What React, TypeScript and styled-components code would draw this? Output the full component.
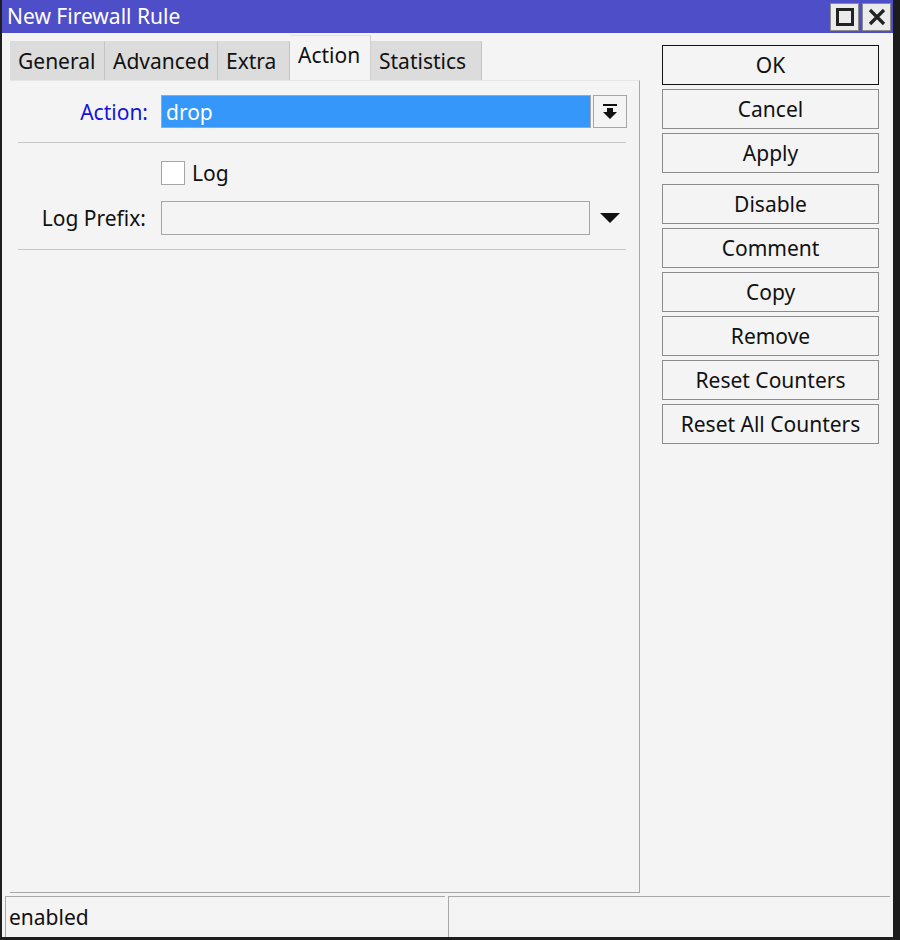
import React from "react";
import styled, { createGlobalStyle } from "styled-components";

const GlobalStyle = createGlobalStyle`
  html, body {
    margin: 0;
    padding: 0;
    background: #1c1c1c;
  }
  * { box-sizing: border-box; }
`;

const Window = styled.div`
  width: 900px;
  height: 940px;
  display: flex;
  flex-direction: column;
  background: #f4f4f4;
  border-left: 2px solid #1e1e1e;
  border-right: 7px solid #1c1c1c;
  border-bottom: 3px solid #1e1e1e;
  font-family: "Noto Sans", "Open Sans", sans-serif;
  font-size: 21px;
  color: #111;
  overflow: hidden;
`;

const TitleBar = styled.div`
  height: 33px;
  flex: 0 0 33px;
  background: #4e4ec9;
  display: flex;
  align-items: center;
  padding: 0 2px 0 5px;
`;

const Title = styled.div`
  flex: 1;
  color: #fff;
  font-size: 21px;
  line-height: 33px;
`;

const TitleButton = styled.button`
  width: 29px;
  height: 28px;
  margin-left: 3px;
  padding: 0;
  background: #ebebeb;
  border: 1px solid #8a8a8a;
  display: flex;
  align-items: center;
  justify-content: center;
`;

const Body = styled.div`
  flex: 1;
  display: flex;
  min-height: 0;
`;

const Main = styled.div`
  width: 638px;
  padding-left: 8px;
  display: flex;
  flex-direction: column;
`;

const TabStrip = styled.div`
  display: flex;
  align-items: flex-end;
  height: 47px;
`;

const Tab = styled.div<{ $active?: boolean; $w: number }>`
  width: ${(p) => p.$w}px;
  height: ${(p) => (p.$active ? "45px" : "39px")};
  padding: ${(p) => (p.$active ? "0 8px 6px" : "0 8px 0")};
  background: ${(p) => (p.$active ? "#f4f4f4" : "#dcdcdc")};
  border-right: 1px solid ${(p) => (p.$active ? "#cfcfcf" : "#c4c4c4")};
  border-top: 1px solid ${(p) => (p.$active ? "#e2e2e2" : "#dcdcdc")};
  display: flex;
  align-items: center;
  white-space: nowrap;
`;

const Panel = styled.div`
  flex: 1;
  border-right: 1px solid #a8a8a8;
  border-bottom: 1px solid #a8a8a8;
  border-top: 1px solid #e6e6e6;
  padding: 14px 13px 0 8px;
`;

const Row = styled.div<{ $top?: number }>`
  display: grid;
  grid-template-columns: 132px 430px 35px;
  column-gap: 11px;
  align-items: center;
  margin-top: ${(p) => p.$top ?? 0}px;
`;

const Label = styled.div<{ $blue?: boolean }>`
  text-align: right;
  color: ${(p) => (p.$blue ? "#1414d8" : "#111")};
  white-space: nowrap;
  padding-right: ${(p) => (p.$blue ? 2 : 4)}px;
`;

const Field = styled.div<{ $selected?: boolean }>`
  height: ${(p) => (p.$selected ? 33 : 34)}px;
  border: 1px solid #a6a6a6;
  background: ${(p) => (p.$selected ? "#3597f9" : "#f4f4f4")};
  color: ${(p) => (p.$selected ? "#fff" : "#111")};
  padding-left: 4px;
  display: flex;
  align-items: center;
  width: ${(p) => (p.$selected ? 430 : 429)}px;
`;

const DropButton = styled.div`
  width: 34px;
  height: 33px;
  margin-left: -9px;
  border: 1px solid #a6a6a6;
  background: #f4f4f4;
  display: flex;
  align-items: center;
  justify-content: center;
`;

const ArrowSlot = styled.div`
  margin-left: -9px;
  width: 34px;
  display: flex;
  justify-content: center;
`;

const Separator = styled.div<{ $top: number }>`
  height: 1px;
  background: #c8c8c8;
  margin-top: ${(p) => p.$top}px;
`;

const CheckWrap = styled.label`
  display: flex;
  align-items: center;
  gap: 7px;
`;

const Check = styled.span`
  width: 24px;
  height: 24px;
  background: #fff;
  border: 1px solid #a6a6a6;
`;

const Side = styled.div`
  width: 217px;
  margin-left: 22px;
  padding-top: 12px;
  display: flex;
  flex-direction: column;
`;

const Group = styled.div`
  display: flex;
  flex-direction: column;
  gap: 4px;
  & + & {
    margin-top: 11px;
  }
`;

const ActionButton = styled.button<{ $default?: boolean }>`
  height: 40px;
  width: 217px;
  background: #f4f4f4;
  border: 1px solid ${(p) => (p.$default ? "#111" : "#8c8c8c")};
  font-family: inherit;
  font-size: 21px;
  color: #111;
  padding: 0;
  white-space: nowrap;
`;

const StatusBar = styled.div`
  flex: 0 0 44px;
  display: flex;
  padding: 3px 3px 0 3px;
  gap: 3px;
`;

const StatusCell = styled.div<{ $w: number }>`
  width: ${(p) => p.$w}px;
  border-top: 1px solid #a8a8a8;
  border-left: 1px solid #a8a8a8;
  padding-left: 3px;
  display: flex;
  align-items: center;
`;

const MaxIcon = () => (
  <svg width="18" height="18" viewBox="0 0 18 18">
    <rect x="1.5" y="1.5" width="15" height="15" fill="none" stroke="#222" strokeWidth="3" />
  </svg>
);

const CloseIcon = () => (
  <svg width="18" height="18" viewBox="0 0 18 18">
    <path d="M2 2 L16 16 M16 2 L2 16" stroke="#222" strokeWidth="3.2" />
  </svg>
);

const DropIcon = () => (
  <svg width="16" height="18" viewBox="0 0 16 18">
    <rect x="1" y="1" width="14" height="2" fill="#111" />
    <path d="M5 5 H11 V9 H15 L8 16 L1 9 H5 Z" fill="#111" />
  </svg>
);

const DownArrow = () => (
  <svg width="20" height="10" viewBox="0 0 20 10">
    <path d="M0 0 H20 L10 10 Z" fill="#111" />
  </svg>
);

const tabs = [
  { name: "General", w: 95 },
  { name: "Advanced", w: 113 },
  { name: "Extra", w: 72 },
  { name: "Action", w: 81 },
  { name: "Statistics", w: 111 },
];

export default function App() {
  return (
    <>
      <GlobalStyle />
      <Window>
        <TitleBar>
          <Title>New Firewall Rule</Title>
          <TitleButton>
            <MaxIcon />
          </TitleButton>
          <TitleButton>
            <CloseIcon />
          </TitleButton>
        </TitleBar>
        <Body>
          <Main>
            <TabStrip>
              {tabs.map((t) => (
                <Tab key={t.name} $w={t.w} $active={t.name === "Action"}>
                  {t.name}
                </Tab>
              ))}
            </TabStrip>
            <Panel>
              <Row>
                <Label $blue>Action:</Label>
                <Field $selected>drop</Field>
                <DropButton>
                  <DropIcon />
                </DropButton>
              </Row>
              <Separator $top={14} />
              <Row $top={16}>
                <span />
                <CheckWrap>
                  <Check />
                  Log
                </CheckWrap>
              </Row>
              <Row $top={14}>
                <Label>Log Prefix:</Label>
                <Field />
                <ArrowSlot>
                  <DownArrow />
                </ArrowSlot>
              </Row>
              <Separator $top={14} />
            </Panel>
          </Main>
          <Side>
            <Group>
              <ActionButton $default>OK</ActionButton>
              <ActionButton>Cancel</ActionButton>
              <ActionButton>Apply</ActionButton>
            </Group>
            <Group>
              <ActionButton>Disable</ActionButton>
              <ActionButton>Comment</ActionButton>
              <ActionButton>Copy</ActionButton>
              <ActionButton>Remove</ActionButton>
              <ActionButton>Reset Counters</ActionButton>
              <ActionButton>Reset All Counters</ActionButton>
            </Group>
          </Side>
        </Body>
        <StatusBar>
          <StatusCell $w={440}>enabled</StatusCell>
          <StatusCell $w={443} />
        </StatusBar>
      </Window>
    </>
  );
}
